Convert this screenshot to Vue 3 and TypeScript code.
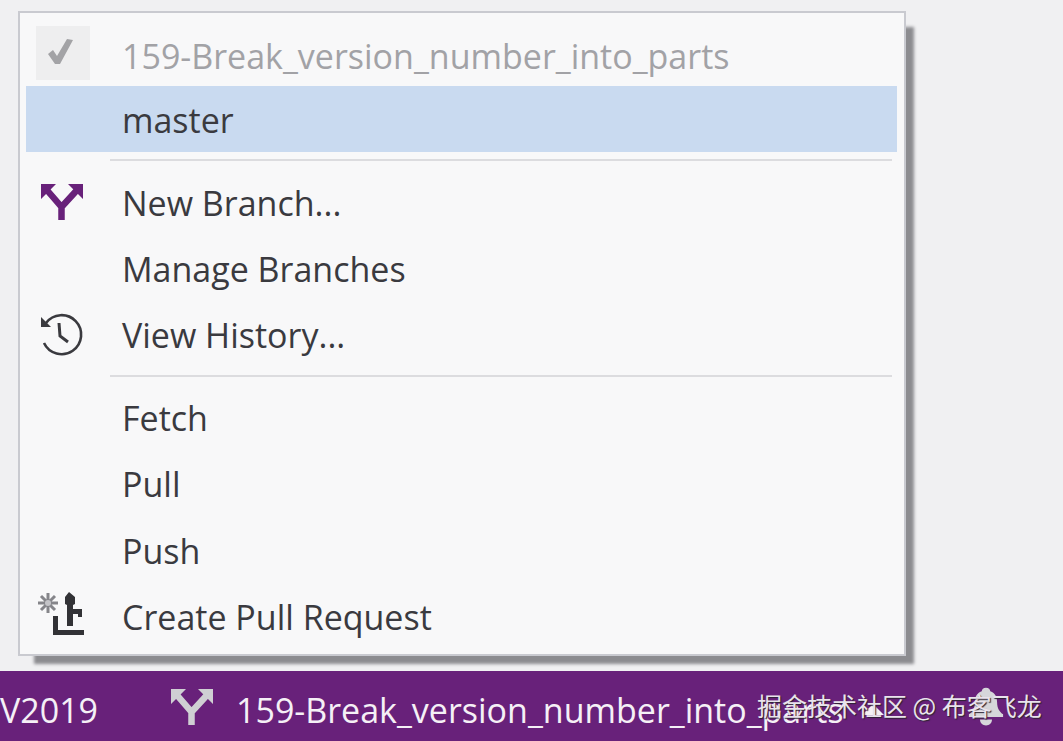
<template>
  <div class="page">
    <div class="menu-wrap">
      <div class="menu">
        <template v-for="(item, index) in items" :key="index">
          <div v-if="item.sep" class="separator"></div>
          <div v-else class="menu-item" :class="{ current: item.current, hovered: item.hovered }">
            <div class="menu-icon">
              <svg v-if="item.icon === 'check'" class="check" viewBox="0 0 54 54" width="54" height="54">
                <path d="M12 28l5-4 4 6 10-17 6 1-13 24h-5z" fill="#a3a3a6" />
              </svg>
              <svg v-else-if="item.icon === 'branch'" class="glyph" viewBox="0 0 44 38" width="44" height="38">
                <path :d="branchArms" fill="none" stroke="#68217a" stroke-width="6.500" />
                <path :d="branchHeads" fill="#68217a" />
              </svg>
              <svg v-else-if="item.icon === 'history'" class="glyph" viewBox="0 0 44 44" width="44" height="44">
                <path d="M6 11A19.500 19.500 0 1 1 4 31" fill="none" stroke="#3a3a3f" stroke-width="2.600" />
                <path d="M1 5v10h10z" fill="#3a3a3f" />
                <path d="M19 11l1 13 8 6" fill="none" stroke="#3a3a3f" stroke-width="3" />
              </svg>
              <svg v-else-if="item.icon === 'pull'" class="glyph" viewBox="0 0 44 48" width="44" height="48">
                <path d="M8 1v20M-2 11h20M1 4l14 14M15 4L1 18" stroke="#85858a" stroke-width="3" />
                <circle cx="8" cy="11" r="3" fill="#c4c4c8" />
                <path d="M29 0l6 5v7l-2 1v4h9v8h-4v-3h-5v12h-6V13l-2-1V5z" fill="#323236" />
                <path d="M13 24h5v14h26v5H13z" fill="#323236" />
              </svg>
            </div>
            <span class="menu-label">{{ item.label }}</span>
          </div>
        </template>
      </div>
    </div>

    <div class="status-bar">
      <span class="status-left">V2019</span>
      <svg class="status-branch" viewBox="0 0 44 38" width="44" height="38">
        <path :d="branchArms" fill="none" stroke="#cfcfd3" stroke-width="6.500" />
        <path :d="branchHeads" fill="#cfcfd3" />
      </svg>
      <span class="status-branch-name">159-Break_version_number_into_parts</span>
      <span class="status-arrow"></span>
      <svg class="status-bell" viewBox="0 0 44 48" width="38" height="41">
        <path d="M22 1c3 0 5 2 5 4 6 2 8 7 8 13 0 7 3 11 7 14v3H2v-3c4-3 7-7 7-14 0-6 2-11 8-13 0-2 2-4 5-4z" fill="#d6d6da" />
        <path d="M15 38h14c0 4-3 7-7 7s-7-3-7-7z" fill="#d6d6da" />
      </svg>
      <span class="watermark">掘金技术社区 @ 布客飞龙</span>
    </div>
  </div>
</template>

<script setup lang="ts">
interface MenuEntry {
  label?: string;
  icon?: 'check' | 'branch' | 'history' | 'pull';
  current?: boolean;
  hovered?: boolean;
  sep?: boolean;
}

// branch arrow, shared by the menu and the status bar
const branchArms = 'M6 6l15.500 18v13M38 6L21.500 24';
const branchHeads = 'M1 1h15L1 16zM43 1H28l15 15z';

const items: MenuEntry[] = [
  { label: '159-Break_version_number_into_parts', icon: 'check', current: true },
  { label: 'master', hovered: true },
  { sep: true },
  { label: 'New Branch...', icon: 'branch' },
  { label: 'Manage Branches' },
  { label: 'View History...', icon: 'history' },
  { sep: true },
  { label: 'Fetch' },
  { label: 'Pull' },
  { label: 'Push' },
  { label: 'Create Pull Request', icon: 'pull' }
];
</script>

<style>
html,
body {
  margin: 0;
  background: #f0f0f2;
}
</style>

<style scoped>
.page {
  width: 1063px;
  height: 741px;
  display: flex;
  flex-direction: column;
  justify-content: space-between;
  background: #f0f0f2;
  font-family: "Open Sans", "Noto Sans", sans-serif;
  overflow: hidden;
}

.menu-wrap {
  padding: 11px 0 0 18px;
}

.menu {
  width: 871px;
  padding: 11px 7px 5px 6px;
  background: #f8f8f9;
  border: 2px solid #c9cad0;
  box-shadow: 12px 12px 3px -4px #8c8c90;
}

.menu-item {
  height: 66.4px;
  display: flex;
  align-items: center;
  color: #3a3a3f;
  font-size: 34px;
}

.menu-item:first-child {
  height: 62px;
}

.menu-item.hovered {
  background: #c9daf0;
}

.menu-item.current {
  color: #a2a2a6;
}

.menu-icon {
  width: 96px;
  flex-shrink: 0;
  padding-left: 10px;
  box-sizing: border-box;
  display: flex;
  align-items: center;
}

.glyph {
  margin-left: 4px;
  overflow: visible;
}

.check {
  margin-bottom: 4px;
  background: #eeeeef;
}

.menu-label {
  padding-top: 2px;
  white-space: nowrap;
}

.separator {
  height: 2px;
  margin: 7px 5px 7px 84px;
  background: #dcdcdf;
}

.status-bar {
  position: relative;
  height: 70px;
  box-sizing: border-box;
  padding-top: 8px;
  display: flex;
  align-items: center;
  background: #68217a;
  color: #f5f0f6;
  font-size: 34px;
  white-space: nowrap;
}

.status-left {
  width: 170px;
  flex-shrink: 0;
}

.status-branch {
  flex-shrink: 0;
  margin-top: -6px;
}

.status-branch-name {
  margin-left: 22px;
}

.status-arrow {
  position: absolute;
  left: 862px;
  top: 33px;
  border-left: 11px solid transparent;
  border-right: 11px solid transparent;
  border-bottom: 11px solid #f4f0f5;
}

.status-bell {
  position: absolute;
  left: 967px;
  top: 16px;
}

.watermark {
  position: absolute;
  left: 757px;
  top: 16px;
  font-family: "Noto Sans CJK SC", "Noto Sans", sans-serif;
  font-size: 25px;
  color: #e9e3ec;
  text-shadow: 1px 1px 1px #2b2230;
}
</style>
